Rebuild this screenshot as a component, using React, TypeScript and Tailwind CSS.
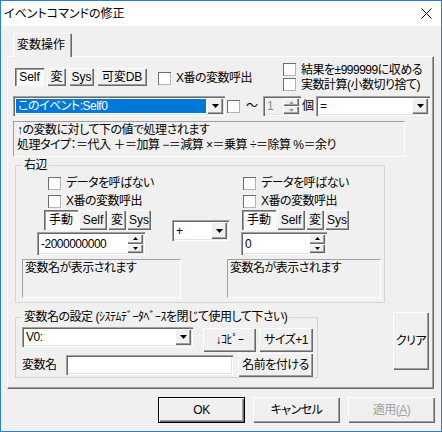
import type { ReactNode } from 'react';

const raised =
  'bg-[#f0f0f0] shadow-[inset_1px_1px_0_#ffffff,inset_-1px_-1px_0_#696969,inset_-2px_-2px_0_#a0a0a0]';
const pressed =
  'bg-[#fafafa] shadow-[inset_1px_1px_0_#696969,inset_2px_2px_0_#a0a0a0,inset_-1px_-1px_0_#ffffff]';
const sunken =
  'p-[2px] shadow-[inset_1px_1px_0_#a0a0a0,inset_2px_2px_0_#696969,inset_-1px_-1px_0_#ffffff,inset_-2px_-2px_0_#e3e3e3]';
const staticBox = 'border border-t-[#a0a0a0] border-l-[#a0a0a0] border-r-white border-b-white';

function Tri({ up = false, w = 7, h = 4, color = '#000' }: { up?: boolean; w?: number; h?: number; color?: string }) {
  const pts = up ? `0,${h} ${w},${h} ${w / 2},0` : `0,0 ${w},0 ${w / 2},${h}`;
  return (
    <svg width={w} height={h} viewBox={`0 0 ${w} ${h}`}>
      <polygon points={pts} fill={color} />
    </svg>
  );
}

function Btn({ className, down, children }: { className: string; down?: boolean; children: ReactNode }) {
  return (
    <div className={`flex shrink-0 items-center justify-center ${down ? pressed : raised} ${className}`}>
      {children}
    </div>
  );
}

function Check({ label }: { label?: string }) {
  return (
    <div className="flex items-center">
      <div className="h-[13px] w-[13px] shrink-0 bg-white shadow-[inset_1px_1px_0_#6e6e6e,inset_-1px_-1px_0_#b4b4b4]" />
      {label && <span className="ml-[5px] whitespace-nowrap">{label}</span>}
    </div>
  );
}

function Combo({ className, text, selected }: { className: string; text: string; selected?: boolean }) {
  return (
    <div className={`flex shrink-0 bg-white ${sunken} ${className}`}>
      <div
        className={`flex flex-1 items-center overflow-hidden whitespace-nowrap pl-[2px] ${
          selected ? 'm-[1px] bg-[#0078d7] text-white' : ''
        }`}
      >
        {text}
      </div>
      <div className={`flex w-[16px] items-center justify-center ${raised}`}>
        <Tri />
      </div>
    </div>
  );
}

function Spin({ className, value, disabled }: { className: string; value: string; disabled?: boolean }) {
  const c = disabled ? '#a0a0a0' : '#000';
  return (
    <div className={`flex shrink-0 ${disabled ? 'bg-[#f0f0f0]' : 'bg-white'} ${sunken} ${className}`}>
      <div className={`flex flex-1 items-center pl-[2px] ${disabled ? 'text-[#8a8a8a]' : ''}`}>{value}</div>
      <div className="flex w-[16px] flex-col">
        <div className={`flex flex-1 items-center justify-center ${raised}`}>
          <Tri up w={5} h={3} color={c} />
        </div>
        <div className={`flex flex-1 items-center justify-center ${raised}`}>
          <Tri w={5} h={3} color={c} />
        </div>
      </div>
    </div>
  );
}

function SideCol({ pad }: { pad: 'left' | 'right' }) {
  const left = pad === 'left';
  return (
    <div className={`flex flex-col ${left ? 'ml-[21px] w-[114px]' : 'ml-[12px]'}`}>
      <div className={`flex h-[18px] items-center ${left ? 'pl-[11px]' : 'pl-[2px]'}`}>
        <Check label="データを呼ばない" />
      </div>
      <div className={`flex h-[18px] items-center ${left ? 'pl-[11px]' : 'pl-[2px]'}`}>
        <Check label="X番の変数呼出" />
      </div>
      <div className={`flex h-[20px] gap-[1px] tracking-normal ${left ? 'pl-[7px]' : 'pl-[1px]'}`}>
        <Btn className="h-[20px] w-[34px]" down>手動</Btn>
        <Btn className="h-[20px] w-[28px]">Self</Btn>
        <Btn className="h-[20px] w-[18px]">変</Btn>
        <Btn className="h-[20px] w-[24px]">Sys</Btn>
      </div>
      {left ? (
        <Spin className="mt-[2px] h-[23px] w-[108px]" value="-2000000000" />
      ) : (
        <Spin className="mt-[2px] h-[23px] w-[86px]" value="0" />
      )}
    </div>
  );
}

export default function App() {
  return (
    <div className="flex h-[432px] w-[442px] flex-col overflow-hidden border border-[#2a7fd6] bg-[#f0f0f0] font-[family-name:'Liberation_Sans','Noto_Sans_CJK_JP',sans-serif] text-[12px] leading-[14px] tracking-[-0.5px] text-black [font-feature-settings:'palt']">
      {/* title bar */}
      <div className="flex h-[25px] shrink-0 items-center bg-white">
        <span className="pl-[3px] tracking-normal">イベントコマンドの修正</span>
        <svg className="ml-auto mr-[9px]" width="11" height="11" viewBox="0 0 11 11">
          <path d="M0.5 0.5L10.5 10.5M10.5 0.5L0.5 10.5" stroke="#000" strokeWidth="1" />
        </svg>
      </div>

      {/* tab */}
      <div className="relative z-10 -mb-[1px] ml-[12px] mt-[7px] flex h-[24px] w-[59px] items-center rounded-t-[2px] bg-[#f0f0f0] pl-[4px] tracking-normal shadow-[inset_1px_1px_0_#ffffff,inset_-1px_0_0_#696969,inset_-2px_0_0_#a0a0a0]">
        変数操作
      </div>

      {/* tab panel */}
      <div className="ml-[6px] flex h-[333px] w-[427px] flex-col border border-t-white border-l-white border-r-[#696969] border-b-[#696969] shadow-[inset_-1px_-1px_0_#a0a0a0]">
        {/* row: target buttons + options */}
        <div className="mt-[5px] flex h-[30px]">
          <div className="ml-[7px] flex w-[268px] items-center">
            <div className="flex gap-[3px] tracking-normal">
              <Btn className="h-[18px] w-[29px]" down>Self</Btn>
              <Btn className="h-[18px] w-[19px]">変</Btn>
              <Btn className="h-[18px] w-[25px]">Sys</Btn>
              <Btn className="h-[18px] w-[50px]">可変DB</Btn>
            </div>
            <div className="ml-[11px] mt-[2px]">
              <Check label="X番の変数呼出" />
            </div>
          </div>
          <div className="flex flex-col">
            <div className="flex h-[15px] items-center">
              <Check label="結果を±999999に収める" />
            </div>
            <div className="flex h-[15px] items-center">
              <Check label="実数計算(小数切り捨て)" />
            </div>
          </div>
        </div>

        {/* row: variable select */}
        <div className="mt-[4px] flex h-[20px] items-center">
          <Combo className="ml-[5px] h-[20px] w-[212px]" text="このイベント:Self0" selected />
          <div className="ml-[2px]">
            <Check />
          </div>
          <span className="ml-[6px] w-[12px]">〜</span>
          <Spin className="ml-[5px] h-[20px] w-[38px]" value="1" disabled />
          <span className="ml-[1px] w-[12px]">個</span>
          <Combo className="ml-[2px] h-[20px] w-[114px]" text="=" />
        </div>

        {/* info */}
        <div className={`ml-[5px] mt-[5px] h-[36px] w-[392px] px-[3px] pt-[1px] leading-[15px] ${staticBox}`}>
          <div>↑の変数に対して下の値で処理されます</div>
          <div className="whitespace-nowrap">処理タイプ：＝代入 ＋＝加算 −＝減算 ×＝乗算 ÷＝除算 %＝余り</div>
        </div>

        {/* right side */}
        <fieldset className="ml-[7px] mt-[1px] h-[145px] w-[370px] border border-[#d5d5d5]">
          <legend className="ml-[6px] px-[2px] leading-[14px]">右辺</legend>
          <div className="mt-[2px] flex items-start">
            <SideCol pad="left" />
            <Combo className="ml-[21px] mt-[46px] h-[21px] w-[57px]" text="+" />
            <SideCol pad="right" />
          </div>
          <div className="mt-[4px] flex">
            <div className={`ml-[6px] h-[39px] w-[159px] pl-[2px] pt-[1px] ${staticBox}`}>変数名が表示されます</div>
            <div className={`ml-[46px] h-[39px] w-[154px] pl-[2px] pt-[1px] ${staticBox}`}>変数名が表示されます</div>
          </div>
        </fieldset>

        {/* variable name setting */}
        <div className="mt-[7px] flex items-start">
          <fieldset className="ml-[7px] h-[68px] w-[303px] border border-[#d5d5d5]">
            <legend className="ml-[6px] whitespace-nowrap px-[2px] leading-[14px]">
              変数名の設定 (ｼｽﾃﾑﾃﾞｰﾀﾍﾞｰｽを閉じて使用して下さい)
            </legend>
            <div className="mt-[3px] flex items-start">
              <Combo className="ml-[6px] h-[20px] w-[171px]" text="V0:" />
              <Btn className="ml-[10px] mt-[1px] h-[24px] w-[53px]">↓ｺﾋﾟｰ</Btn>
              <Btn className="ml-[3px] mt-[1px] h-[24px] w-[54px]">サイズ+1</Btn>
            </div>
            <div className="mt-[1px] flex h-[24px] items-center">
              <span className="ml-[6px] w-[44px]">変数名</span>
              <div className={`h-[20px] w-[167px] bg-white ${sunken}`} />
              <Btn className="ml-[5px] h-[24px] w-[75px]">名前を付ける</Btn>
            </div>
          </fieldset>
          <Btn className="ml-[75px] mt-[2px] h-[58px] w-[36px]">クリア</Btn>
        </div>
      </div>

      {/* dialog buttons */}
      <div className="mt-[8px] flex justify-end gap-[8px] pr-[6px]">
        <div className="h-[26px] w-[87px] border border-black">
          <Btn className="h-full w-full">OK</Btn>
        </div>
        <Btn className="h-[26px] w-[87px]">キャンセル</Btn>
        <Btn className="h-[26px] w-[87px] text-[#a0a0a0]">
          適用(<span className="underline">A</span>)
        </Btn>
      </div>
    </div>
  );
}
